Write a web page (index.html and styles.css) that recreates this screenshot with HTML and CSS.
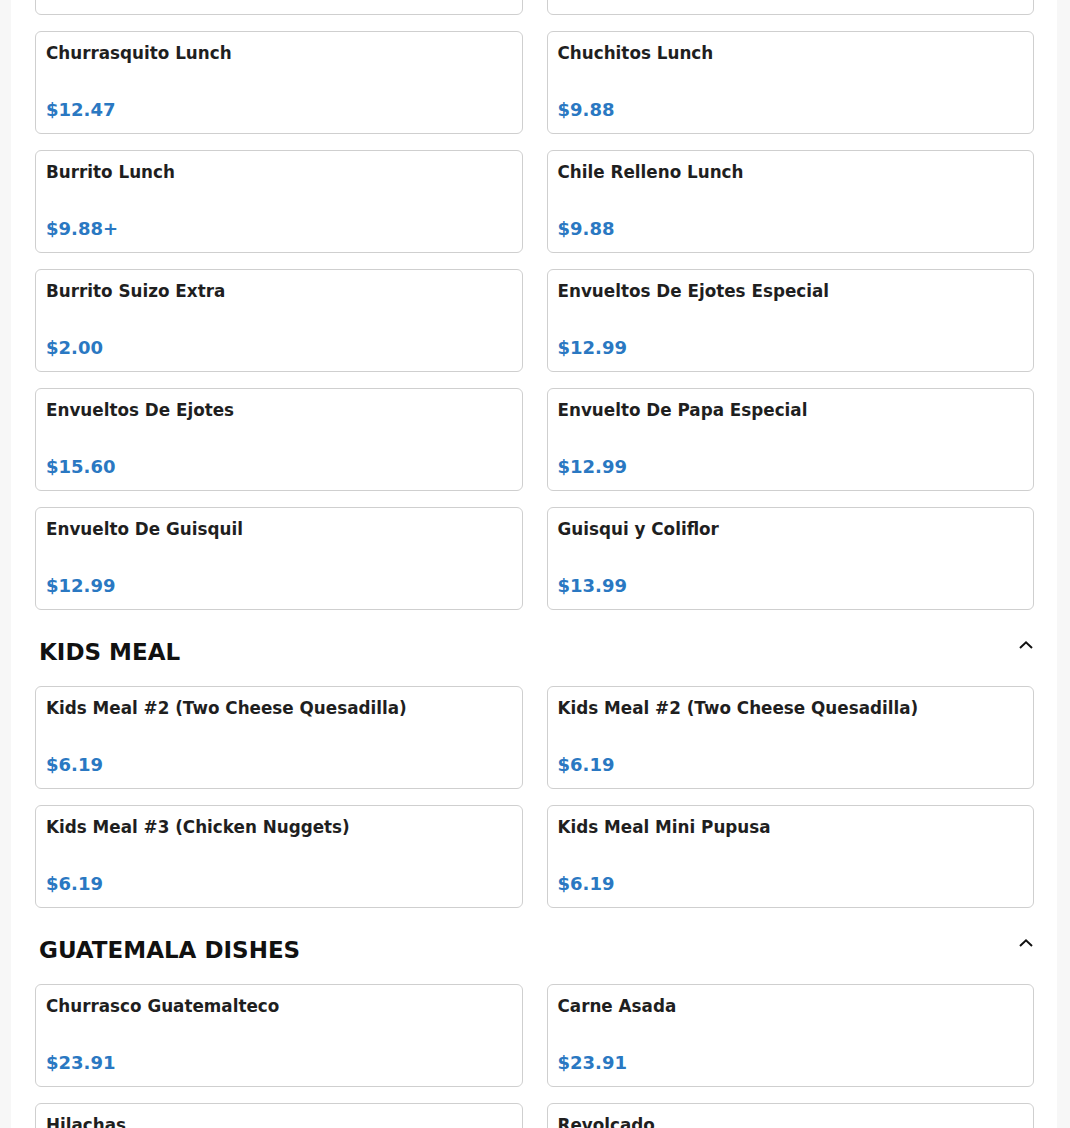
FILE: index.html
```html
<!DOCTYPE html>
<html lang="en">
<head>
<meta charset="utf-8">
<title>Menu</title>
<link rel="stylesheet" href="styles.css">
</head>
<body>
<main class="page">
  <section class="section section-first">
    <div class="grid">
      <div class="card"><div class="name">Pupusa Lunch</div><div class="price">$12.47</div></div>
      <div class="card"><div class="name">Tamal Lunch</div><div class="price">$12.47</div></div>
      <div class="card"><div class="name">Churrasquito Lunch</div><div class="price">$12.47</div></div>
      <div class="card"><div class="name">Chuchitos Lunch</div><div class="price">$9.88</div></div>
      <div class="card"><div class="name">Burrito Lunch</div><div class="price">$9.88+</div></div>
      <div class="card"><div class="name">Chile Relleno Lunch</div><div class="price">$9.88</div></div>
      <div class="card"><div class="name">Burrito Suizo Extra</div><div class="price">$2.00</div></div>
      <div class="card"><div class="name">Envueltos De Ejotes Especial</div><div class="price">$12.99</div></div>
      <div class="card"><div class="name">Envueltos De Ejotes</div><div class="price">$15.60</div></div>
      <div class="card"><div class="name">Envuelto De Papa Especial</div><div class="price">$12.99</div></div>
      <div class="card"><div class="name">Envuelto De Guisquil</div><div class="price">$12.99</div></div>
      <div class="card"><div class="name">Guisqui y Coliflor</div><div class="price">$13.99</div></div>
    </div>
  </section>

  <section class="section">
    <div class="section-head">
      <h2 class="section-title">KIDS MEAL</h2>
      <svg class="chevron" width="16" height="16" viewBox="0 0 16 16" aria-hidden="true"><polyline points="2,10 8,4.3 14,10" fill="none" stroke="#111" stroke-width="2"/></svg>
    </div>
    <div class="grid">
      <div class="card"><div class="name">Kids Meal #2 (Two Cheese Quesadilla)</div><div class="price">$6.19</div></div>
      <div class="card"><div class="name">Kids Meal #2 (Two Cheese Quesadilla)</div><div class="price">$6.19</div></div>
      <div class="card"><div class="name">Kids Meal #3 (Chicken Nuggets)</div><div class="price">$6.19</div></div>
      <div class="card"><div class="name">Kids Meal Mini Pupusa</div><div class="price">$6.19</div></div>
    </div>
  </section>

  <section class="section">
    <div class="section-head">
      <h2 class="section-title">GUATEMALA DISHES</h2>
      <svg class="chevron" width="16" height="16" viewBox="0 0 16 16" aria-hidden="true"><polyline points="2,10 8,4.3 14,10" fill="none" stroke="#111" stroke-width="2"/></svg>
    </div>
    <div class="grid">
      <div class="card"><div class="name">Churrasco Guatemalteco</div><div class="price">$23.91</div></div>
      <div class="card"><div class="name">Carne Asada</div><div class="price">$23.91</div></div>
      <div class="card"><div class="name">Hilachas</div><div class="price">$18.99</div></div>
      <div class="card"><div class="name">Revolcado</div><div class="price">$18.99</div></div>
    </div>
  </section>
</main>
</body>
</html>
```

FILE: styles.css
```css
html, body {
  margin: 0;
  padding: 0;
  background: #f7f7f7;
  overflow: hidden;
}

body {
  font-family: "DejaVu Sans", "Liberation Sans", sans-serif;
  color: #1f1f1f;
}

.page {
  background: #ffffff;
  margin: -88px 13px 0 11px;
  padding: 0 23px 40px 24px;
  min-height: 1300px;
}

.section-head {
  display: flex;
  justify-content: space-between;
  align-items: flex-start;
  margin: 26px 0 18px;
  padding: 0 0 0 4px;
}

.section-title {
  margin: 0;
  font-size: 23px;
  line-height: 32px;
  font-weight: 700;
  color: #111111;
}

.chevron {
  display: block;
  margin: 2px 0 0 0;
}

.grid {
  display: grid;
  grid-template-columns: 1fr 1fr;
  column-gap: 24px;
  row-gap: 16px;
}

.card {
  border: 1px solid #cfcfcf;
  border-radius: 6px;
  padding: 11px 10px 12px 10px;
  background: #ffffff;
}

.name {
  font-size: 16.8px;
  line-height: 20px;
  font-weight: 700;
  color: #1f1f1f;
}

.price {
  margin-top: 36px;
  font-size: 18px;
  line-height: 22px;
  font-weight: 700;
  color: #2a78c2;
}
```
